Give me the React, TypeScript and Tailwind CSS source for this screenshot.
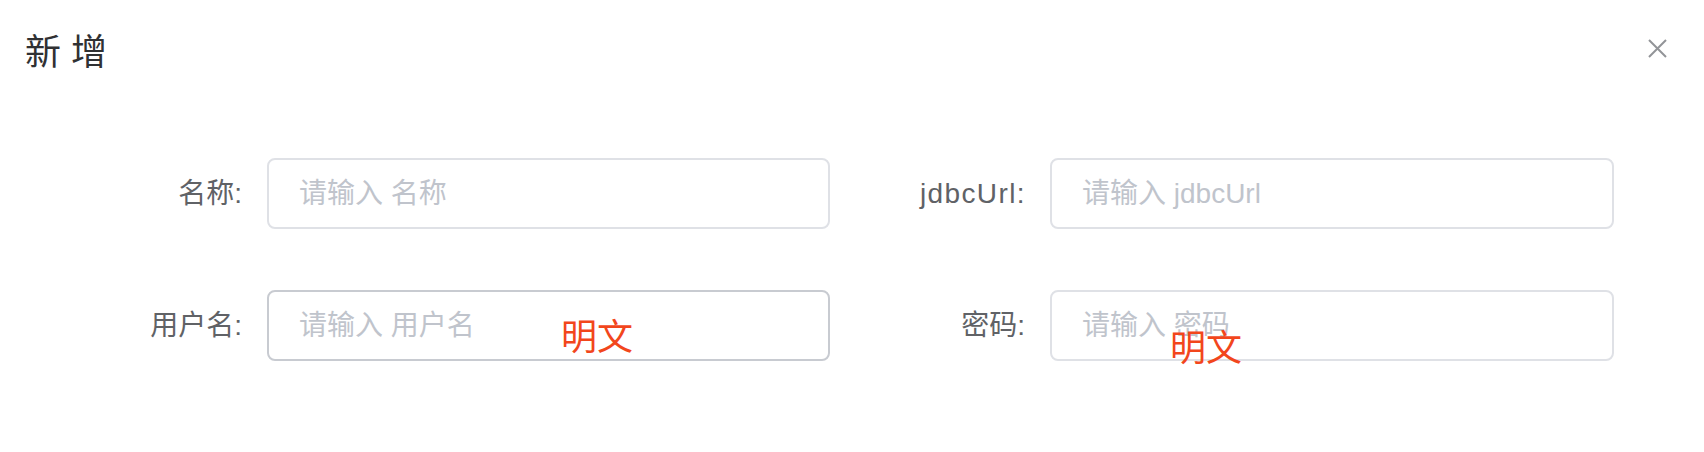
import React from "react";

const FONT = '"Liberation Sans", "Noto Sans CJK SC", sans-serif';

function Field({
  label,
  placeholder,
  width,
  hover,
  wideLabel,
}: {
  label: string;
  placeholder: string;
  width: string;
  hover?: boolean;
  wideLabel?: boolean;
}) {
  return (
    <div className="flex items-center">
      <label
        className={`w-[200px] shrink-0 text-right text-[28px] leading-none text-[#606266] ${
          wideLabel ? "pr-[24px] tracking-[1.4px]" : "pr-[25px]"
        }`}
      >
        {label}
      </label>
      <input
        readOnly
        placeholder={placeholder}
        className={`${width} h-[71px] rounded-[8px] border-2 ${
          hover ? "border-[#c8cbd1]" : "border-[#dfe1e6]"
        } bg-white px-[30px] text-[28px] text-[#606266] outline-none placeholder:text-[#c0c4cc]`}
        style={{ fontFamily: FONT }}
      />
    </div>
  );
}

export default function App() {
  return (
    <div
      className="relative h-[452px] w-[1704px] overflow-hidden bg-white"
      style={{ fontFamily: FONT }}
    >
      <div className="flex items-start justify-between pl-[25px] pr-[37px] pt-[33px]">
        <h1 className="text-[36px] leading-[40px] font-normal text-[#303133]">新 增</h1>
        <button className="mt-[6px] flex h-[19px] w-[19px] items-center justify-center">
          <svg width="19" height="19" viewBox="0 0 19 19" fill="none">
            <path d="M1 1L18 18M18 1L1 18" stroke="#929498" strokeWidth="2" />
          </svg>
        </button>
      </div>

      <div className="mt-[85px] flex flex-col gap-y-[61px] pl-[67px]">
        <div className="flex gap-x-[20px]">
          <Field label="名称:" placeholder="请输入 名称" width="w-[563px]" />
          <Field label="jdbcUrl:" placeholder="请输入 jdbcUrl" width="w-[564px]" wideLabel />
        </div>
        <div className="flex gap-x-[20px]">
          <Field label="用户名:" placeholder="请输入 用户名" width="w-[563px]" hover />
          <Field label="密码:" placeholder="请输入 密码" width="w-[564px]" />
        </div>
      </div>

      <span className="absolute left-[561px] top-[320px] text-[36px] leading-none text-[#f2461c]">
        明文
      </span>
      <span className="absolute left-[1170px] top-[331px] text-[36px] leading-none text-[#f2461c]">
        明文
      </span>
    </div>
  );
}
